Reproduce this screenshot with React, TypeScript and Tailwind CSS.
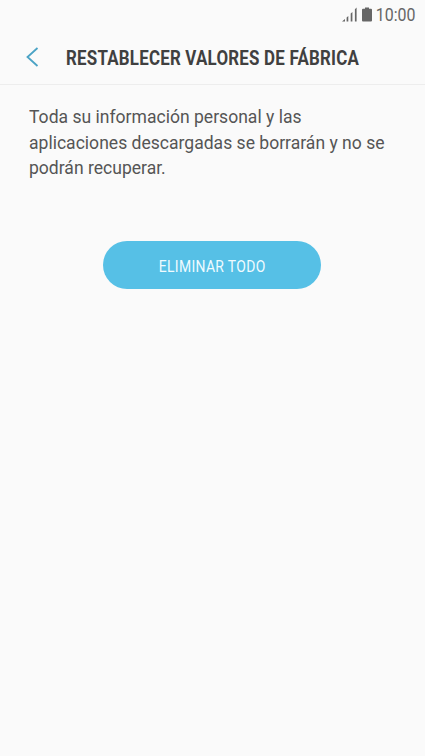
export default function App() {
  return (
    <main className="flex h-[756px] w-[425px] flex-col overflow-hidden bg-[#fafafa] font-['Roboto',sans-serif]">
      <div className="flex h-[30px] items-center justify-end pr-[11px] text-[#666]">
        <svg className="mb-px" width="16" height="15" viewBox="0 0 16 15" fill="currentColor" aria-hidden="true">
          <path d="M0 14.500L3 12v2.500zM4.600 10.500L6.300 9v5.500H4.600zM8.700 6.500l1.700-1.500v9.500H8.700zM12.900 2.200L14.600.500v14h-1.700z" />
        </svg>
        <svg className="mb-px ml-1" width="10" height="15" viewBox="0 0 10 15" fill="currentColor" aria-hidden="true">
          <path d="M3 .5h4v1.200h2q1 0 1 1v10.800q0 1-1 1H1q-1 0-1-1V2.700q0-1 1-1h2z" />
        </svg>
        <span className="w-[42px] origin-right scale-x-[0.91] text-right text-[17.5px] leading-5">10:00</span>
      </div>
      <header className="flex h-[55px] items-center border-b border-[#ededed] pl-[26px]">
        <svg width="13" height="20" viewBox="0 0 13 20" fill="none" stroke="#4ba3c5" strokeWidth="1.800" aria-hidden="true">
          <path d="M11.500 1L1.500 10l10 9" />
        </svg>
        <h1 className="ml-[27px] origin-left scale-x-[0.845] pt-px text-[20px] font-bold tracking-[0.260px] whitespace-nowrap text-[#404040]">RESTABLECER VALORES DE FÁBRICA</h1>
      </header>
      <p className="mt-[19px] ml-[28.5px] origin-left scale-x-[0.975] text-[18px] leading-[25.5px] whitespace-nowrap text-[#555]">
        Toda su información personal y las
        <br />
        aplicaciones descargadas se borrarán y no se
        <br />
        podrán recuperar.
      </p>
      <button className="mt-[60.750px] ml-[103px] flex h-[48px] w-[218px] items-center justify-center rounded-full bg-[#56c0e6] pt-[3px] text-[17px] text-[#f0fbff]">
        <span className="ml-px scale-x-[0.82] tracking-[0.400px]">ELIMINAR TODO</span>
      </button>
    </main>
  );
}
